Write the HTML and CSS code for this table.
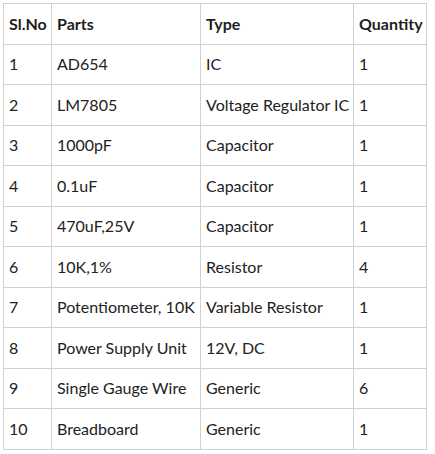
FILE: index.html
```html
<!DOCTYPE html>
<html>
<head>
<meta charset="utf-8">
<link rel="stylesheet" href="styles.css">
</head>
<body>
<table class="parts">
  <colgroup>
    <col class="c1"><col class="c2"><col class="c3"><col class="c4">
  </colgroup>
  <thead>
    <tr><th>Sl.No</th><th>Parts</th><th>Type</th><th>Quantity</th></tr>
  </thead>
  <tbody>
    <tr><td>1</td><td>AD654</td><td>IC</td><td>1</td></tr>
    <tr><td>2</td><td>LM7805</td><td>Voltage Regulator IC</td><td>1</td></tr>
    <tr><td>3</td><td>1000pF</td><td>Capacitor</td><td>1</td></tr>
    <tr><td>4</td><td>0.1uF</td><td>Capacitor</td><td>1</td></tr>
    <tr><td>5</td><td>470uF,25V</td><td>Capacitor</td><td>1</td></tr>
    <tr><td>6</td><td>10K,1%</td><td>Resistor</td><td>4</td></tr>
    <tr><td>7</td><td>Potentiometer, 10K</td><td>Variable Resistor</td><td>1</td></tr>
    <tr><td>8</td><td>Power Supply Unit</td><td>12V, DC</td><td>1</td></tr>
    <tr><td>9</td><td>Single Gauge Wire</td><td>Generic</td><td>6</td></tr>
    <tr><td>10</td><td>Breadboard</td><td>Generic</td><td>1</td></tr>
  </tbody>
</table>
</body>
</html>
```
FILE: styles.css
```css
body {
  margin: 3px;
  background: #fff;
  font-family: Lato, "Liberation Sans", sans-serif;
  font-size: 16px;
  color: #222;
}
.parts {
  border-collapse: collapse;
  table-layout: fixed;
  width: 423px;
}
.c1 { width: 48px; }
.c2 { width: 149px; }
.c3 { width: 153px; }
.c4 { width: 73px; }
.parts th,
.parts td {
  border: 1px solid #d0d0d0;
  padding: 0 5px;
  height: 39.5px;
  text-align: left;
  vertical-align: middle;
  white-space: nowrap;
  line-height: 24px;
}
.parts th {
  font-weight: bold;
  color: #1e1e1e;
}
```
